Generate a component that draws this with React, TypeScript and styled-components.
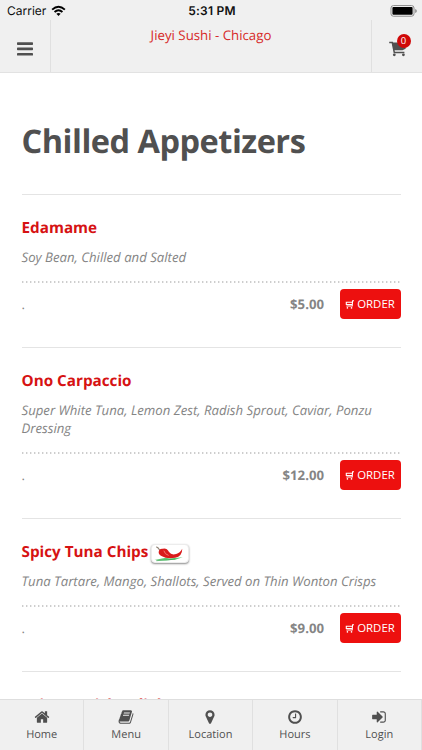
import React from "react";
import styled, { createGlobalStyle } from "styled-components";

const Global = createGlobalStyle`
  * { box-sizing: border-box; }
  html, body { margin: 0; padding: 0; overflow: hidden; background: #fff; }
  body {
    font-family: "Open Sans", sans-serif;
    color: #505050;
    text-rendering: geometricPrecision;
  }
`;

const Screen = styled.div`
  width: 422px;
  height: 750px;
  display: flex;
  flex-direction: column;
  overflow: hidden;
  background: #fff;
`;

const StatusBar = styled.div`
  flex: 0 0 20px;
  display: grid;
  grid-template-columns: 1fr auto 1fr;
  align-items: center;
  padding: 2px 5px 0 7px;
  background: #f0f0f0;
  color: #111;
  font: 12px/18px Inter, sans-serif;
`;

const Carrier = styled.div`
  display: flex;
  align-items: center;
  gap: 5px;
`;

const Clock = styled.div`
  font-weight: 600;
  letter-spacing: 0.22px;
`;

const Battery = styled.svg`
  justify-self: end;
`;

const Header = styled.header`
  flex: 0 0 53px;
  display: grid;
  grid-template-columns: 51px 1fr 51px;
  background: #f0f0f0;
  border-bottom: 1px solid #e2e2e2;
`;

const HeaderButton = styled.div<{ $side: "left" | "right" }>`
  display: flex;
  align-items: center;
  justify-content: center;
  padding-top: 5px;
  border: 0 solid #e0e0e0;
  border-${(p) => (p.$side === "left" ? "right" : "left")}-width: 1px;
`;

const Restaurant = styled.div`
  padding-top: 5px;
  text-align: center;
  font-size: 13.25px;
  line-height: 20px;
  color: #d72a29;
`;

const CartHolder = styled.div`
  position: relative;
  height: 17px;
`;

const CartBadge = styled.span`
  position: absolute;
  left: 8px;
  top: -6px;
  width: 14px;
  height: 14px;
  border-radius: 50%;
  background: #cf0808;
  color: #fff;
  font-size: 9.5px;
  line-height: 14px;
  text-align: center;
`;

const Content = styled.main`
  flex: 1;
  min-height: 0;
  overflow: hidden;
  padding: 0 21.5px;
`;

const Heading = styled.h1`
  margin: 0;
  height: 121px;
  padding-top: 45px;
  font-size: 32.5px;
  letter-spacing: -0.5px;
  line-height: 46px;
  font-weight: 700;
  color: #505050;
  white-space: nowrap;
`;

const Item = styled.section`
  border-top: 1px solid #e4e4e4;
  padding-top: 21px;
  padding-bottom: 28px;
`;

const ItemTitle = styled.h2`
  display: flex;
  align-items: center;
  gap: 3px;
  height: 24px;
  margin: 0 0 8px;
  font-size: 15.25px;
  line-height: 24px;
  font-weight: 700;
  color: #d61213;
`;

const Description = styled.p`
  margin: 0 0 15px;
  font-size: 13.18px;
  line-height: 18px;
  font-style: italic;
  color: #858585;
`;

const Dots = styled.svg`
  display: block;
  width: 100%;
  height: 2px;
`;

const PriceRow = styled.div`
  display: flex;
  align-items: center;
  padding-top: 6px;
  height: 36px;
  font-size: 13.2px;
  color: #858585;
`;

const Price = styled.span`
  margin-left: auto;
  margin-right: 15.5px;
  font-weight: 700;
`;

const OrderButton = styled.button`
  width: 61px;
  height: 30px;
  margin: 0;
  padding: 0;
  border: 0;
  border-radius: 4px;
  background: #ed100f;
  color: #fff;
  display: flex;
  align-items: center;
  justify-content: center;
  gap: 3px;
  font: 11.4px/20px "Open Sans", sans-serif;
`;

const Nav = styled.nav`
  flex: 0 0 51px;
  display: grid;
  grid-template-columns: repeat(5, 1fr);
  background: #f0f0f0;
  border-top: 1px solid #dedede;
`;

const NavItem = styled.div`
  display: flex;
  flex-direction: column;
  align-items: center;
  padding-top: 9px;
  border-right: 1px solid #e0e0e0;
  font-size: 11px;
  line-height: 16px;
  color: #505050;
  gap: 2px;
`;

const navItems = [
  {
    label: "Home",
    path: "M1472 992v480q0 26-19 45t-45 19h-384v-384h-256v384h-384q-26 0-45-19t-19-45v-480q0-1 .5-3t.5-3l575-474 575 474q1 2 1 6zm223-69l-62 74q-8 9-21 11h-3q-13 0-21-7l-692-577-692 577q-12 8-24 7-13-2-21-11l-62-74q-8-10-7-23.5t11-21.5l719-599q32-26 76-26t76 26l244 204v-195q0-14 9-23t23-9h192q14 0 23 9t9 23v408l219 182q10 8 11 21.5t-7 23.5z",
  },
  {
    label: "Menu",
    path: "M1703 478q40 57 18 129l-275 906q-19 64-76.5 107.5t-122.5 43.5h-923q-77 0-148.5-53.5t-99.5-131.5q-24-67-2-127 0-4 3-27t4-37q1-8-3-21.5t-3-19.5q2-11 8-21t16.5-23.5 16.5-23.5q23-38 45-91.5t30-91.5q3-10 .5-30t-.5-28q3-11 17-28t17-23q21-36 42-92t25-90q1-9-2.5-32t.5-28q4-13 22-30.5t22-22.5q19-26 42.5-84.5t27.5-96.5q1-8-3-25.5t-2-26.5q2-8 9-18t18-23 17-21q8-12 16.5-30.5t15-35 16-36 19.5-32 26.5-23.5 36-11.5 47.5 5.5l-1 3q38-9 51-9h761q74 0 114 56t18 130l-274 906q-36 119-71.5 153.5t-128.5 34.5h-869q-27 0-38 15-11 16-1 43 24 70 144 70h923q29 0 56-15.5t35-41.5l300-987q7-22 5-57 38 15 59 43zm-1064 2q-4 13 2 22.5t20 9.5h608q13 0 25.5-9.5t16.5-22.5l21-64q4-13-2-22.5t-20-9.5h-608q-13 0-25.5 9.5t-16.5 22.5zm-83 256q-4 13 2 22.5t20 9.5h608q13 0 25.5-9.5t16.5-22.5l21-64q4-13-2-22.5t-20-9.5h-608q-13 0-25.5 9.5t-16.5 22.5z",
  },
  {
    label: "Location",
    path: "M1152 640q0-106-75-181t-181-75-181 75-75 181 75 181 181 75 181-75 75-181zm256 0q0 109-33 179l-364 774q-16 33-47.5 52t-67.5 19-67.5-19-46.5-52l-365-774q-33-70-33-179 0-212 150-362t362-150 362 150 150 362z",
  },
  {
    label: "Hours",
    path: "M1024 544v448q0 14-9 23t-23 9h-320q-14 0-23-9t-9-23v-64q0-14 9-23t23-9h224v-352q0-14 9-23t23-9h64q14 0 23 9t9 23zm416 352q0-148-73-273t-198-198-273-73-273 73-198 198-73 273 73 273 198 198 273 73 273-73 198-198 73-273zm224 0q0 209-103 385.5t-279.5 279.5-385.5 103-385.5-103-279.5-279.5-103-385.5 103-385.5 279.5-279.5 385.5-103 385.5 103 279.5 279.5 103 385.5z",
  },
  {
    label: "Login",
    path: "M1312 896q0 26-19 45l-544 544q-19 19-45 19t-45-19-19-45v-288h-448q-26 0-45-19t-19-45v-384q0-26 19-45t45-19h448v-288q0-26 19-45t45-19 45 19l544 544q19 19 19 45zm352-352v704q0 119-84.5 203.5t-203.5 84.5h-320q-13 0-22.5-9.5t-9.5-22.5q0-4-1-20t-.5-26.5 3-23.5 10-19.5 20.5-6.5h320q66 0 113-47t47-113v-704q0-66-47-113t-113-47h-312l-11.5-1-11.5-3-8-5.5-7-9-2-13.5q0-4-1-20t-.5-26.5 3-23.5 10-19.5 20.5-6.5h320q119 0 203.5 84.5t84.5 203.5z",
  },
];

const items = [
  { name: "Edamame", text: "Soy Bean, Chilled and Salted", price: "$5.00" },
  {
    name: "Ono Carpaccio",
    text: "Super White Tuna, Lemon Zest, Radish Sprout, Caviar, Ponzu Dressing",
    price: "$12.00",
  },
  {
    name: "Spicy Tuna Chips",
    text: "Tuna Tartare, Mango, Shallots, Served on Thin Wonton Crisps",
    price: "$9.00",
    spicy: true,
  },
];

const ChiliFrame = styled.span`
  display: flex;
  width: 38px;
  height: 19px;
  margin-top: 2px;
  border-radius: 4px;
  background: #fff;
  border: 1px solid #ececec;
  box-shadow: 0 1px 2px rgba(0, 0, 0, 0.45);
`;

const Chili = () => (
  <ChiliFrame>
    <svg width="36" height="17" viewBox="0 0 37 18">
      <path d="M2 15.8l12-2.2 4 .8 14-1.4-8 2.6-10 .5z" fill="#65c878" />
      <path d="M4 16.6l12-.8 8-1" stroke="#35aa50" strokeWidth=".8" fill="none" />
      <path d="M4 2q2 .5 4 4" stroke="#8d8173" strokeWidth="1.2" fill="none" />
      <path
        d="M6.5 8Q6.5 3.5 11 4Q15 3 17.5 7.5Q20 11 25 9.5Q29 8.5 31.5 4Q31.5 12 24 13.6Q15 15 10 12Q6.5 10.5 6.5 8z"
        fill="#d91b1b"
      />
      <path d="M12 6q1 4 5 5" stroke="#f47b74" strokeWidth="1" fill="none" />
    </svg>
  </ChiliFrame>
);

const OrderCart = () => (
  <svg width="9" height="9" viewBox="0 0 9 9" fill="none" stroke="#fff">
    <path d="M9 .8H7.6L7.2 6H1.4M7.3 4.5H1.3V2.2H7.4" strokeWidth="1.1" />
    <circle cx="2.4" cy="7.9" r=".8" fill="#fff" stroke="none" />
    <circle cx="6.5" cy="7.9" r=".8" fill="#fff" stroke="none" />
  </svg>
);

export default function App() {
  return (
    <Screen>
      <Global />
      <StatusBar>
        <Carrier>
          Carrier
          <svg width="15" height="12" viewBox="0 0 16 12" fill="none" stroke="#000" strokeWidth="2">
            <path d="M1.2 4.6Q8-1.8 14.8 4.6" />
            <path d="M3.8 7.1Q8 3.2 12.2 7.1" />
            <path d="M5.7 9Q8 7 10.3 9L8 11.3z" fill="#000" stroke="none" />
          </svg>
        </Carrier>
        <Clock>5:31 PM</Clock>
        <Battery width="27" height="12" viewBox="0 0 27 12">
          <rect x="1" y=".6" width="23" height="10.6" rx="2.4" fill="#f8f8f8" stroke="#888" />
          <rect x="2.4" y="2" width="20.2" height="7.8" rx="1" fill="#000" />
          <path d="M25.2 4q1.6.5 1.6 2T25.2 8z" fill="#888" />
        </Battery>
      </StatusBar>
      <Header>
        <HeaderButton $side="left">
          <svg width="16" height="14" viewBox="0 0 16 14" fill="#505050">
            <rect width="16" height="2.7" rx=".7" y=".3" />
            <rect width="16" height="2.7" rx=".7" y="5.6" />
            <rect width="16" height="2.7" rx=".7" y="10.9" />
          </svg>
        </HeaderButton>
        <Restaurant>Jieyi Sushi - Chicago</Restaurant>
        <HeaderButton $side="right">
          <CartHolder>
            <svg width="17" height="17" viewBox="0 0 17 17">
              <path d="M.2 2.5H3.3L5.3 12.5H15.4" fill="none" stroke="#505050" strokeWidth="1.5" />
              <path d="M3 2.5H16.6V8.8L13.5 10.3H5z" fill="#505050" />
              <circle cx="5.3" cy="14.8" r="1.4" fill="#505050" />
              <circle cx="14.4" cy="14.8" r="1.4" fill="#505050" />
            </svg>
            <CartBadge>0</CartBadge>
          </CartHolder>
        </HeaderButton>
      </Header>
      <Content>
        <Heading>Chilled Appetizers</Heading>
        {items.map((item) => (
          <Item key={item.name}>
            <ItemTitle>
              {item.name}
              {item.spicy && <Chili />}
            </ItemTitle>
            <Description>{item.text}</Description>
            <Dots>
              <line x1="0" y1="1" x2="379" y2="1" stroke="#bdbdbd" strokeWidth="1.3" strokeDasharray="1.4 2.6" />
            </Dots>
            <PriceRow>
              <span>.</span>
              <Price>{item.price}</Price>
              <OrderButton>
                <OrderCart />
                ORDER
              </OrderButton>
            </PriceRow>
          </Item>
        ))}
        <Item>
          <ItemTitle>Asian Ceviche Flight</ItemTitle>
        </Item>
      </Content>
      <Nav>
        {navItems.map((item) => (
          <NavItem key={item.label}>
            <svg width="16" height="16" viewBox="0 0 1792 1792" fill="#505050">
              <path d={item.path} />
            </svg>
            {item.label}
          </NavItem>
        ))}
      </Nav>
    </Screen>
  );
}
